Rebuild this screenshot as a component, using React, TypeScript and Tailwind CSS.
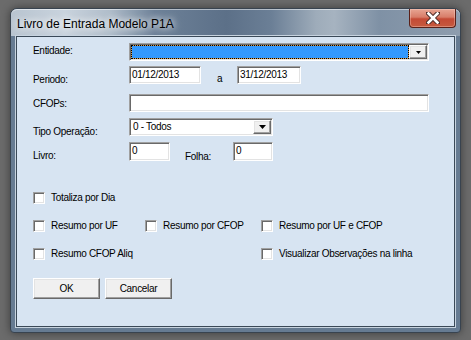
import React from "react";

const sunken =
  "border border-t-[#a0a0a0] border-l-[#a0a0a0] border-b-white border-r-white shadow-[inset_1px_1px_0_#696969,inset_-1px_-1px_0_#e3e3e3]";
const raised =
  "border border-t-white border-l-white border-b-[#696969] border-r-[#696969] shadow-[inset_-1px_-1px_0_#a0a0a0,inset_1px_1px_0_#e3e3e3]";

function Arrow({ w, h }: { w: number; h: number }) {
  return (
    <svg width={w} height={h} viewBox={`0 0 ${w} ${h}`}>
      <polygon points={`0,0 ${w},0 ${w / 2},${h}`} fill="#000" />
    </svg>
  );
}

function Check({ label }: { label: string }) {
  return (
    <div className="flex items-center gap-[6px] h-[12px]">
      <span className={`w-[12px] h-[12px] bg-white shrink-0 ${sunken}`} />
      <span className="leading-[12px] whitespace-nowrap">{label}</span>
    </div>
  );
}

export default function App() {
  return (
    <div className="min-h-screen w-[471px] h-[340px] bg-[#6b6b6b] pt-[8px] pl-[10px] font-['Liberation_Sans',Arial,sans-serif] text-black">
      <div className="relative w-[451px] h-[325px] rounded-t-[7px] rounded-b-[4px] border border-[#38434f] bg-[#667b92] flex flex-col shadow-[0_0_8px_rgba(0,0,0,0.45)]">
        {/* title bar */}
        <div className="h-[27px] shrink-0 rounded-t-[6px] flex items-center pl-[6px] bg-[linear-gradient(to_right,#b8c4d0_0%,#c9d3dd_12%,#b0bdca_22%,#6d8198_32%,#5c7088_48%,#6b7f96_58%,#9eacba_68%,#a6b3c0_72%,#7f91a5_82%,#8e9dae_100%)] shadow-[inset_0_1px_0_rgba(255,255,255,0.5)]">
          <span className="text-[12px] leading-[14px] mt-[2px] [text-shadow:0_0_6px_#fff,0_0_10px_#fff]">
            Livro de Entrada Modelo P1A
          </span>
        </div>
        <div className="absolute top-0 right-[4px] w-[47px] h-[19px] rounded-b-[4px] border border-t-0 border-[#5a2018] bg-[linear-gradient(to_bottom,#e7a593_0%,#d87d69_45%,#c44a35_55%,#c65a3f_100%)] flex items-center justify-center shadow-[inset_0_0_0_1px_rgba(255,220,210,0.35)]">
          <svg width="14" height="12" viewBox="0 0 14 12">
            <path d="M2 1 L12 11 M12 1 L2 11" stroke="#4a2a26" strokeWidth="4.5" strokeLinecap="square" />
            <path d="M2.5 1.5 L11.5 10.5 M11.5 1.5 L2.5 10.5" stroke="#fff" strokeWidth="2.6" strokeLinecap="square" />
          </svg>
        </div>

        {/* client area */}
        <div className="mx-[5px] h-[291px] border border-[#3a4958] bg-[#d7e4f2] shadow-[0_0_0_1px_#c7d3df] text-[10px] tracking-[-0.3px] pl-[16px] flex flex-col">
          {/* Entidade */}
          <div className="flex mt-[6px] h-[18px]">
            <span className="w-[96px] mt-[2px] leading-[12px]">Entidade:</span>
            <div className={`w-[300px] h-[18px] bg-white flex p-[1px] ${sunken}`}>
              <div className="flex-1 bg-[#d99a4a]">
                <div className="h-full border border-dotted border-black bg-[#3399ff] bg-clip-padding" />
              </div>
              <div className={`w-[18px] bg-[#f0f0f0] flex items-center justify-center ${raised}`}>
                <Arrow w={5} h={3} />
              </div>
            </div>
          </div>

          {/* Periodo */}
          <div className="flex mt-[5px] h-[18px]">
            <span className="w-[96px] mt-[8px] leading-[12px]">Periodo:</span>
            <div className={`w-[72px] h-[18px] bg-white pl-[2px] pt-[2px] leading-[12px] ${sunken}`}>01/12/2013</div>
            <span className="ml-[16px] w-[20px] mt-[7px] leading-[12px]">a</span>
            <div className={`w-[64px] h-[18px] bg-white pl-[2px] pt-[2px] leading-[12px] ${sunken}`}>31/12/2013</div>
          </div>

          {/* CFOPs */}
          <div className="flex mt-[10px] h-[18px]">
            <span className="w-[96px] mt-[4px] leading-[12px]">CFOPs:</span>
            <div className={`w-[300px] h-[18px] bg-white ${sunken}`} />
          </div>

          {/* Tipo Operação */}
          <div className="flex mt-[6px] h-[18px]">
            <span className="w-[96px] mt-[8px] leading-[12px] whitespace-nowrap">Tipo Operação:</span>
            <div className={`w-[144px] h-[18px] bg-white flex p-[1px] ${sunken}`}>
              <span className="flex-1 pl-[2px] pt-[1px] leading-[12px]">0 - Todos</span>
              <div className={`w-[18px] bg-[#f0f0f0] flex items-center justify-center ${raised}`}>
                <Arrow w={7} h={4} />
              </div>
            </div>
          </div>

          {/* Livro / Folha */}
          <div className="flex mt-[6px] h-[19px]">
            <span className="w-[96px] mt-[8px] leading-[12px]">Livro:</span>
            <div className={`w-[41px] h-[19px] bg-white pl-[2px] pt-[2px] leading-[12px] ${sunken}`}>0</div>
            <span className="ml-[15px] w-[48px] mt-[9px] leading-[12px]">Folha:</span>
            <div className={`w-[40px] h-[19px] bg-white pl-[2px] pt-[2px] leading-[12px] ${sunken}`}>0</div>
          </div>

          {/* checkboxes */}
          <div className="mt-[31px]">
            <Check label="Totaliza por Dia" />
          </div>
          <div className="mt-[16px] grid grid-cols-[112px_116px_1fr]">
            <Check label="Resumo por UF" />
            <Check label="Resumo por CFOP" />
            <Check label="Resumo por UF e CFOP" />
          </div>
          <div className="mt-[16px] grid grid-cols-[228px_1fr]">
            <Check label="Resumo CFOP Aliq" />
            <Check label="Visualizar Observações na linha" />
          </div>

          {/* buttons */}
          <div className="mt-[18px] flex gap-[5px]">
            <button className={`w-[67px] h-[21px] bg-[#f0f0f0] leading-[12px] ${raised}`}>OK</button>
            <button className={`w-[67px] h-[21px] bg-[#f0f0f0] leading-[12px] ${raised}`}>Cancelar</button>
          </div>
        </div>
      </div>
    </div>
  );
}
